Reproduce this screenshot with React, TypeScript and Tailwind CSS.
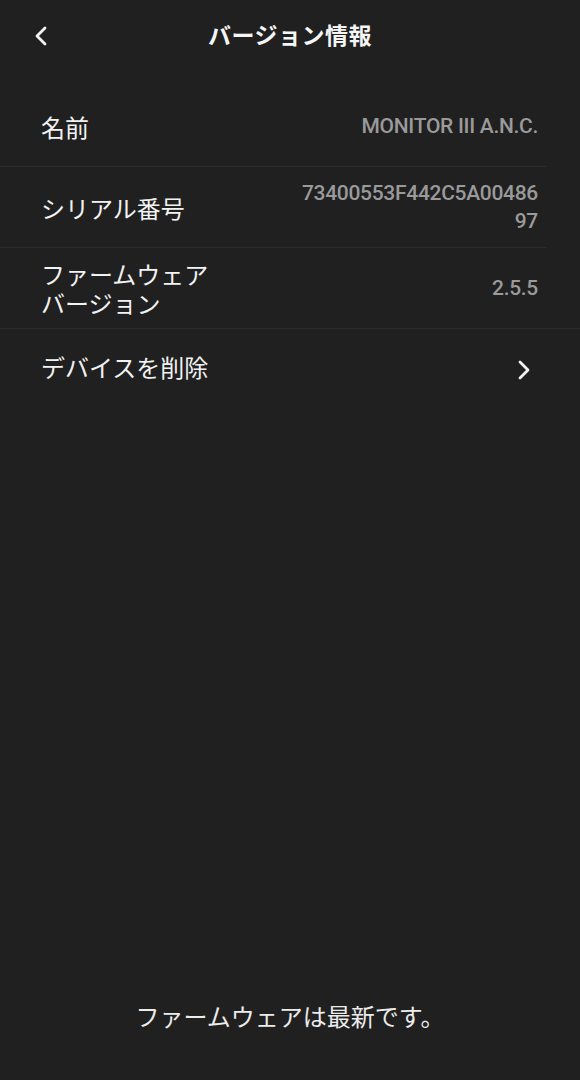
import React from 'react';

const jp = { fontFamily: '"Noto Sans CJK JP", "Noto Sans", sans-serif' };
const num = { fontFamily: 'Roboto, "Liberation Sans", sans-serif' };

function Chevron({ dir }: { dir: 'left' | 'right' }) {
    return (
        <svg width="14" height="22" viewBox="0 0 14 22" fill="none">
            <path
                d={dir === 'left' ? 'M11 3 L3 11 L11 19' : 'M3 3 L11 11 L3 19'}
                stroke="#f2f2f2"
                strokeWidth="2.8"
                strokeLinecap="round"
                strokeLinejoin="round"
            />
        </svg>
    );
}

interface InfoRowProps {
    label: string;
    value: string;
    fullDivider?: boolean;
}

function InfoRow({ label, value, fullDivider }: InfoRowProps) {
    return (
        <div
            className={`flex items-center justify-between h-[81px] pl-[41px] border-b border-[#2c2c2c] ${fullDivider ? 'pr-[42px]' : 'mr-[34px] pr-[8px]'}`}
        >
            <div className="max-w-[170px] text-[24px] leading-[29px] text-[#f2f2f2]" style={jp}>{label}</div>
            <div
                className="max-w-[244px] text-right break-all text-[21px] leading-[28px] font-medium tracking-[-0.3px] text-[#9a9a9a]"
                style={num}
            >
                {value}
            </div>
        </div>
    );
}

export default function App() {
    return (
        <div className="w-full h-[1080px] bg-[#202020] flex flex-col">
            {/* Header */}
            <div className="relative h-[74px] flex items-center justify-center pb-[6px]">
                <button className="absolute left-[34px] top-[25px]">
                    <Chevron dir="left" />
                </button>
                <h1 className="text-[23px] font-bold text-[#f5f5f5] tracking-[0.5px]" style={jp}>バージョン情報</h1>
            </div>

            {/* Info rows */}
            <div className="mt-[12px]">
                <InfoRow label="名前" value="MONITOR III A.N.C." />
                <InfoRow label="シリアル番号" value="73400553F442C5A0048697" />
                <InfoRow label="ファームウェアバージョン" value="2.5.5" fullDivider />
                <div className="flex items-center justify-between h-[76px] pl-[41px] pr-[49px]">
                    <div className="text-[24px] leading-[30px] text-[#f2f2f2]" style={jp}>デバイスを削除</div>
                    <div className="mt-[6px]">
                        <Chevron dir="right" />
                    </div>
                </div>
            </div>

            {/* Footer status */}
            <div className="mt-auto pb-[48px] text-center text-[24px] leading-[32px] text-[#ececec]" style={jp}>
                ファームウェアは最新です。
            </div>
        </div>
    );
}
